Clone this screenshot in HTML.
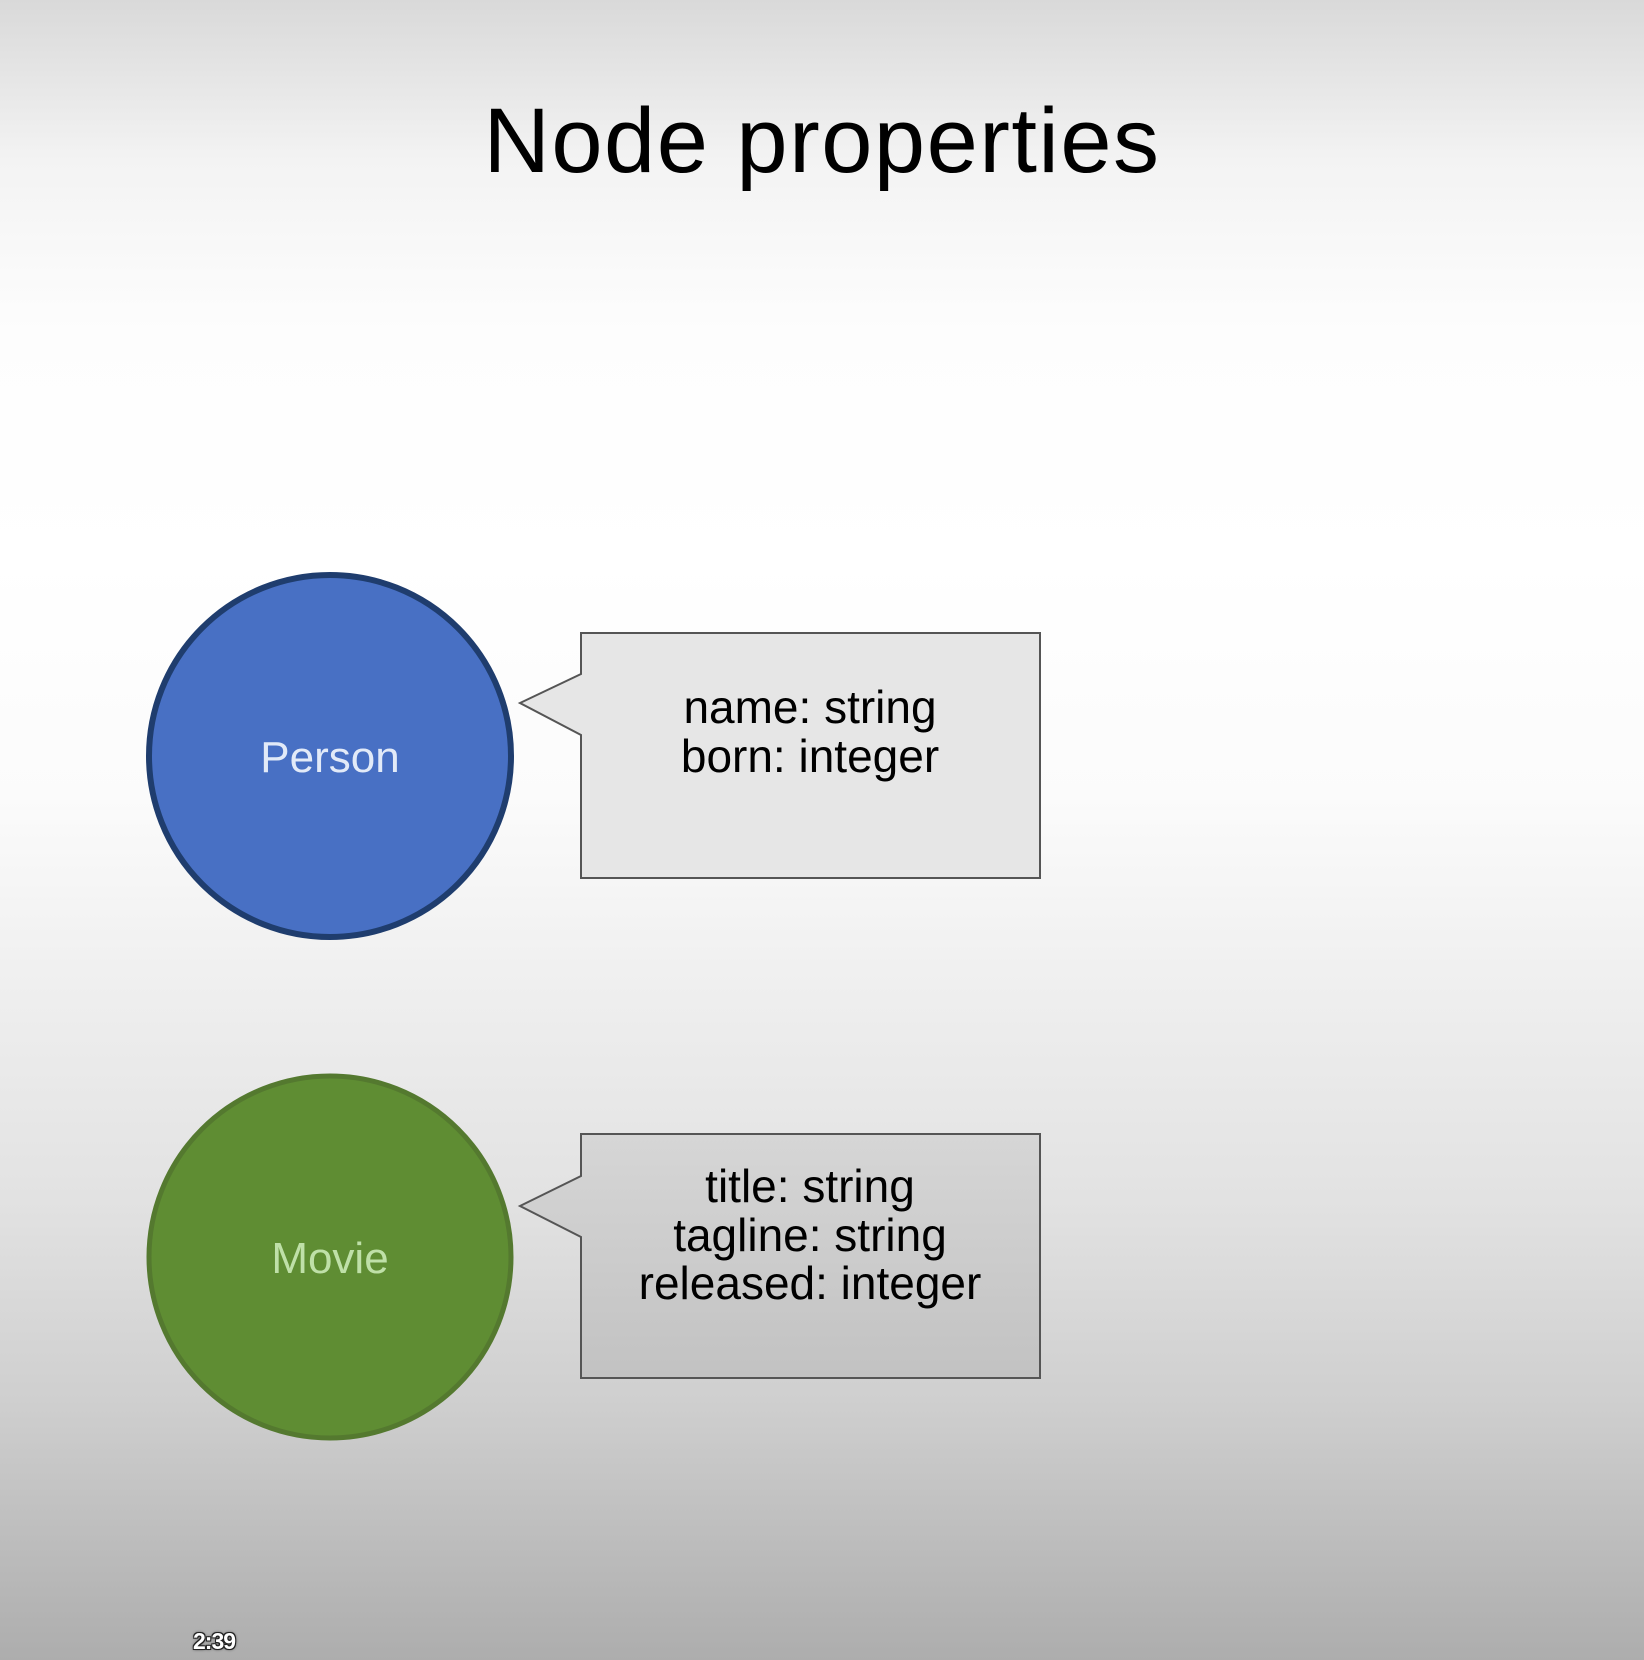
<!DOCTYPE html>
<html><head><meta charset="utf-8"><style>
html,body{margin:0;padding:0}
body{width:1644px;height:1660px;overflow:hidden;position:relative;font-family:"Liberation Sans",sans-serif;
background:linear-gradient(to bottom,#d9d9d9 0px,#f3f3f3 160px,#fdfdfd 330px,#ffffff 560px,#fbfbfb 800px,#eeeeee 1000px,#e2e2e2 1200px,#cfcfcf 1400px,#b5b5b5 1600px,#adadad 1660px);}
.t{position:absolute;left:0;width:1644px;text-align:center;top:91px;font-size:92px;line-height:100px;color:#000;letter-spacing:1.5px}
svg{position:absolute;left:0;top:0}
.ts{position:absolute;left:193px;top:1628px;font-size:23px;color:#fff;font-weight:bold;letter-spacing:-1px;
text-shadow:-1px -1px 0 #222,1px -1px 0 #222,-1px 1px 0 #222,1px 1px 0 #222,0 0 3px #000}
</style></head><body>
<div class="t">Node properties</div>
<svg width="1644" height="1660" xmlns="http://www.w3.org/2000/svg">
<defs><linearGradient id="g2" x1="0" y1="0" x2="0" y2="1"><stop offset="0" stop-color="#d6d6d6"/><stop offset="1" stop-color="#c2c2c2"/></linearGradient></defs>
<circle cx="330" cy="756" r="181" fill="#4870c4" stroke="#1f3d6e" stroke-width="6"/>
<text x="330" y="772" text-anchor="middle" font-family="Liberation Sans" font-size="44" fill="#e2eaf8">Person</text>
<path d="M581 633 H1040 V878 H581 V735 L520 703 L581 674 Z" fill="#e6e6e6" stroke="#555" stroke-width="2"/>
<g font-family="Liberation Sans" font-size="46" fill="#000" text-anchor="middle">
<text x="810" y="723">name: string</text>
<text x="810" y="772">born: integer</text>
</g>
<circle cx="330" cy="1257" r="181" fill="#5f8d33" stroke="#54792f" stroke-width="5"/>
<text x="330" y="1273" text-anchor="middle" font-family="Liberation Sans" font-size="44" fill="#bfe0a8">Movie</text>
<path d="M581 1134 H1040 V1378 H581 V1237 L520 1206 L581 1176 Z" fill="url(#g2)" stroke="#555" stroke-width="2"/>
<g font-family="Liberation Sans" font-size="46" fill="#000" text-anchor="middle">
<text x="810" y="1202">title: string</text>
<text x="810" y="1251">tagline: string</text>
<text x="810" y="1299">released: integer</text>
</g>
</svg>
<div class="ts">2:39</div>
</body></html>
